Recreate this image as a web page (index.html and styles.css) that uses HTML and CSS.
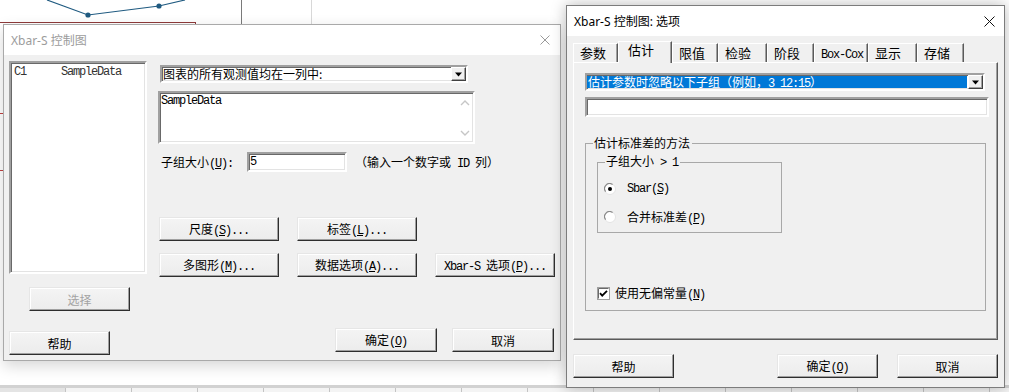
FILE: index.html
```html
<!DOCTYPE html>
<html lang="zh-CN">
<head>
<meta charset="utf-8">
<title>Xbar-S 控制图</title>
<link rel="stylesheet" href="styles.css">
</head>
<body>
<div class="desk">
  <svg class="bg-chart" width="330" height="200" viewBox="0 0 330 200">
    <polyline points="47,0 88,15 159,6 185,0" fill="none" stroke="#1f5a80" stroke-width="1.2"/>
    <circle cx="88" cy="15" r="2.6" fill="#1f5a80"/>
    <circle cx="159" cy="6" r="2.6" fill="#1f5a80"/>
    <line x1="0" y1="22.5" x2="195" y2="22.5" stroke="#8e3a3a"/>
    <line x1="195.5" y1="22" x2="195.5" y2="25" stroke="#8e3a3a"/>
    <line x1="241.5" y1="0" x2="241.5" y2="25" stroke="#7a7a7a"/>
    <line x1="311.5" y1="0" x2="311.5" y2="25" stroke="#d8d8d8"/>
    <line x1="0" y1="113.5" x2="3" y2="113.5" stroke="#c04040"/>
    <line x1="0" y1="170.5" x2="3" y2="170.5" stroke="#c04040"/>
  </svg>

  <div class="sheet">
    <div class="cell head"></div><div class="cell"></div><div class="cell"></div><div class="cell"></div><div class="cell"></div><div class="cell"></div><div class="cell"></div><div class="cell"></div><div class="cell"></div><div class="cell"></div><div class="cell"></div><div class="cell"></div><div class="cell"></div><div class="cell"></div><div class="cell"></div><div class="cell"></div>
  </div>

  <!-- Main dialog (inactive) -->
  <div class="win win-main">
    <div class="titlebar inactive">
      <span class="title">Xbar-S 控制图</span>
      <svg class="close" width="10" height="10" viewBox="0 0 10 10"><path d="M0.5 0.5 L9.5 9.5 M9.5 0.5 L0.5 9.5" stroke="#9a9a9a" stroke-width="1"/></svg>
    </div>
    <div class="main-body">
      <div class="col-left">
        <div class="listbox sunken">
          <div class="list-item"><span class="l">C1</span><span class="l">SampleData</span></div>
        </div>
        <div class="btn btn-select disabled"><span>选择</span></div>
        <div class="btn btn-help"><span>帮助</span></div>
      </div>
      <div class="col-right">
        <div class="combo sunken">
          <span class="combo-text">图表的所有观测值均在一列中:</span>
          <span class="drop"><svg width="9" height="5" viewBox="0 0 9 5"><path d="M1 0.5 H8 L4.5 4.5 Z" fill="#000"/></svg></span>
        </div>
        <div class="textarea sunken">
          <span class="l ta-text">SampleData</span>
          <span class="vscroll">
            <svg width="10" height="6" viewBox="0 0 10 6"><path d="M1 5 L5 1 L9 5" fill="none" stroke="#c6c6c6" stroke-width="1.4"/></svg>
            <svg width="10" height="6" viewBox="0 0 10 6"><path d="M1 1 L5 5 L9 1" fill="none" stroke="#c6c6c6" stroke-width="1.4"/></svg>
          </span>
        </div>
        <div class="size-row">
          <span class="size-label">子组大小<span class="l">(<u>U</u>):</span></span>
          <span class="field sunken"><span class="l">5</span></span>
          <span class="hint">（输入一个数字或<span class="l"> ID </span>列）</span>
        </div>
        <div class="btn-grid">
          <div class="btn"><span>尺度<span class="l">(<u>S</u>)...</span></span></div>
          <div class="btn"><span>标签<span class="l">(<u>L</u>)...</span></span></div>
          <div class="empty"></div>
          <div class="btn"><span>多图形<span class="l">(<u>M</u>)...</span></span></div>
          <div class="btn"><span>数据选项<span class="l">(<u>A</u>)...</span></span></div>
          <div class="btn"><span><span class="l">Xbar-S </span>选项<span class="l">(<u>P</u>)...</span></span></div>
        </div>
        <div class="footer-main">
          <div class="btn btn-wide"><span>确定<span class="l">(<u>O</u>)</span></span></div>
          <div class="btn btn-wide"><span>取消</span></div>
        </div>
      </div>
    </div>
  </div>

  <!-- Options dialog (active) -->
  <div class="win win-opts">
    <div class="titlebar">
      <span class="title">Xbar-S 控制图: 选项</span>
      <svg class="close" width="11" height="11" viewBox="0 0 11 11"><path d="M0.5 0.5 L10.5 10.5 M10.5 0.5 L0.5 10.5" stroke="#111" stroke-width="1"/></svg>
    </div>
    <div class="opts-body">
      <div class="tabs">
        <div class="tab w45">参数</div>
        <div class="tab active w54">估计</div>
        <div class="tab w46">限值</div>
        <div class="tab w49">检验</div>
        <div class="tab w47">阶段</div>
        <div class="tab w54"><span class="l">Box-Cox</span></div>
        <div class="tab w49">显示</div>
        <div class="tab w47">存储</div>
      </div>
      <div class="panel">
        <div class="combo combo-sel sunken">
          <span class="combo-text sel">估计参数时忽略以下子组（例如，<span class="l">3 12:15</span>）</span>
          <span class="drop"><svg width="9" height="5" viewBox="0 0 9 5"><path d="M1 0.5 H8 L4.5 4.5 Z" fill="#000"/></svg></span>
        </div>
        <div class="field field-wide sunken"></div>
        <fieldset class="group group-outer">
          <legend>估计标准差的方法</legend>
          <fieldset class="group group-inner">
            <legend>子组大小<span class="l"> &gt; 1</span></legend>
            <div class="radio-row first">
              <svg width="12" height="12" viewBox="0 0 12 12">
                <circle cx="6" cy="6" r="5.5" fill="#fff" stroke="#e3e3e3"/>
                <path d="M1.6 8.6 A5 5 0 0 1 8.6 1.6" fill="none" stroke="#8a8a8a" stroke-width="1.2"/>
                <circle cx="6" cy="6" r="2" fill="#000"/>
              </svg>
              <span class="l">Sbar(<u>S</u>)</span>
            </div>
            <div class="radio-row">
              <svg width="12" height="12" viewBox="0 0 12 12">
                <circle cx="6" cy="6" r="5.5" fill="#fff" stroke="#e3e3e3"/>
                <path d="M1.6 8.6 A5 5 0 0 1 8.6 1.6" fill="none" stroke="#8a8a8a" stroke-width="1.2"/>
              </svg>
              <span>合并标准差<span class="l">(<u>P</u>)</span></span>
            </div>
          </fieldset>
          <div class="check-row">
            <svg width="13" height="13" viewBox="0 0 13 13">
              <rect x="0.5" y="0.5" width="12" height="12" fill="#fff" stroke="#a0a0a0"/>
              <path d="M1.5 11.5 V1.5 H11.5" fill="none" stroke="#696969"/>
              <path d="M3 6.2 L5.2 8.6 L10 3.8" fill="none" stroke="#000" stroke-width="1.8"/>
            </svg>
            <span>使用无偏常量<span class="l">(<u>N</u>)</span></span>
          </div>
        </fieldset>
      </div>
      <div class="footer-opts">
        <div class="btn btn-o"><span>帮助</span></div>
        <div class="spacer"></div>
        <div class="btn btn-o"><span>确定<span class="l">(<u>O</u>)</span></span></div>
        <div class="btn btn-o"><span>取消</span></div>
      </div>
    </div>
  </div>
</div>
</body>
</html>
```

FILE: styles.css
```css
* { box-sizing: border-box; }

html, body {
  margin: 0;
  padding: 0;
  background: #fff;
}

.desk {
  position: relative;
  width: 1009px;
  height: 392px;
  overflow: hidden;
  background: #fff;
  font-family: "Noto Sans CJK SC", sans-serif;
  font-size: 12px;
  color: #000;
}

.bg-chart {
  position: absolute;
  left: 0;
  top: 0;
}

.sheet {
  position: absolute;
  left: 0;
  top: 385px;
  width: 1009px;
  height: 7px;
  background: #d2d2d2;
  padding-top: 3px;
  display: flex;
}

.cell {
  width: 66px;
  flex: none;
  background: #f4f4f4;
  border-left: 1px solid #c4c4c4;
}

.cell.head {
  width: 65px;
  background: #e4e4e4;
  border-left: none;
}

/* Latin runs in the dialog font */
.l {
  font-family: "Liberation Mono", monospace;
  font-size: 12px;
  letter-spacing: -1.2px;
  white-space: pre;
}

u { text-decoration: underline; text-underline-offset: 1px; }

/* Windows */
.win {
  position: absolute;
  display: flex;
  flex-direction: column;
  background: #f0f0f0;
}

.win-main {
  left: 3px;
  top: 24px;
  width: 558px;
  height: 337px;
  border: 1px solid #a9a9a9;
  box-shadow: 0 5px 14px rgba(0, 0, 0, 0.16);
}

.win-opts {
  left: 566px;
  top: 5px;
  width: 439px;
  height: 383px;
  border: 1px solid #7c7c7c;
  box-shadow: 0 0 14px rgba(0, 0, 0, 0.28);
}

.titlebar {
  flex: none;
  height: 30px;
  background: #fff;
  display: flex;
  align-items: center;
  justify-content: space-between;
  padding: 0 9px 0 7px;
  font-family: "Noto Sans", "Noto Sans CJK SC", sans-serif;
  font-size: 12px;
  color: #000;
}

.win-main .titlebar { padding-right: 10px; }

.titlebar.inactive { color: #9c9c9c; }

/* Sunken 3D edge */
.sunken {
  background: #fff;
  border: 2px solid;
  border-color: #a0a0a0 #fff #fff #a0a0a0;
  box-shadow: inset 1px 1px 0 #696969, inset -1px -1px 0 #e3e3e3;
}

/* Buttons */
.btn {
  height: 24px;
  display: flex;
  align-items: center;
  justify-content: center;
  background: linear-gradient(#f4f4f4, #ececec);
  border: 1px solid;
  border-color: #e6e6e6 #2e2e2e #2e2e2e #e6e6e6;
  box-shadow: inset -1px -1px 0 #a0a0a0, inset 1px 1px 0 #fff;
  white-space: nowrap;
}

.btn.disabled { color: #a3a3a3; }

/* Main dialog body */
.main-body {
  flex: 1;
  display: flex;
}

.col-left {
  width: 154px;
  flex: none;
  padding: 6px 0 0 5px;
  display: flex;
  flex-direction: column;
  align-items: flex-start;
}

.listbox {
  width: 138px;
  height: 213px;
  padding: 2px 0 0 3px;
}

.list-item {
  display: grid;
  grid-template-columns: 47px auto;
  line-height: 14px;
  color: #333;
}

.btn-select {
  width: 101px;
  margin: 13px 0 0 20px;
}

.btn-help {
  width: 101px;
  margin-top: 20px;
}

.col-right {
  flex: 1;
  padding: 10px 5px 0 0;
  display: flex;
  flex-direction: column;
  align-items: flex-start;
}

.combo {
  width: 308px;
  height: 18px;
  margin-left: 2px;
  display: flex;
  align-items: stretch;
  justify-content: space-between;
}

.combo-text {
  padding-left: 1px;
  line-height: 14px;
  white-space: nowrap;
}

.drop {
  width: 15px;
  flex: none;
  display: flex;
  align-items: center;
  justify-content: center;
  background: #f0f0f0;
  border: 1px solid;
  border-color: #fff #404040 #404040 #fff;
  box-shadow: inset -1px -1px 0 #a0a0a0;
}

.textarea {
  width: 317px;
  height: 53px;
  margin-top: 8px;
  display: flex;
  justify-content: space-between;
}

.ta-text {
  padding: 1px 0 0 1px;
  line-height: 14px;
}

.vscroll {
  width: 17px;
  display: flex;
  flex-direction: column;
  justify-content: space-between;
  align-items: center;
  padding: 7px 0 6px;
}

.size-row {
  margin-top: 8px;
  height: 20px;
  display: flex;
  align-items: center;
}

.size-label {
  width: 89px;
  padding-left: 3px;
}

.field {
  width: 100px;
  height: 20px;
  padding-left: 1px;
  display: flex;
  align-items: center;
}

.hint { margin-left: 8px; }

.btn-grid {
  margin: 45px 0 0 1px;
  display: grid;
  grid-template-columns: 120px 120px 120px;
  grid-auto-rows: 24px;
  column-gap: 18px;
  row-gap: 12px;
}

.footer-main {
  align-self: stretch;
  margin-top: 51px;
  display: flex;
  justify-content: flex-end;
  gap: 15px;
  padding-right: 1px;
}

.btn-wide { width: 102px; }

/* Options dialog body */
.opts-body {
  flex: 1;
  padding: 5px 6px 0 6px;
  display: flex;
  flex-direction: column;
}

.tabs {
  height: 21px;
  display: flex;
  align-items: flex-end;
}

.tab {
  height: 19px;
  padding-left: 6px;
  font-size: 13px;
  line-height: 17px;
  white-space: nowrap;
  border-top: 1px solid #fff;
  border-left: 1px solid #fff;
  border-right: 1px solid #5a5a5a;
  box-shadow: inset -1px 0 0 #a0a0a0;
}

.tab .l { font-size: 12px; }

.tab.active {
  position: relative;
  z-index: 1;
  height: 22px;
  margin-bottom: -1px;
  padding-left: 9px;
  line-height: 16px;
  background: #f0f0f0;
}

.w45 { width: 45px; }
.w46 { width: 46px; }
.w47 { width: 47px; }
.w49 { width: 49px; }
.w54 { width: 54px; }

.panel {
  width: 425px;
  height: 278px;
  border: 1px solid;
  border-color: #fff #5a5a5a #5a5a5a #fff;
  box-shadow: inset -1px -1px 0 #a0a0a0;
  padding: 10px 0 0 11px;
  display: flex;
  flex-direction: column;
  align-items: flex-start;
}

.combo-sel {
  width: 400px;
  margin-left: 0;
}

.combo-text.sel {
  flex: 1;
  margin: 1px 1px 1px 0;
  background: #0078d7;
  color: #fff;
  line-height: 12px;
}

.field-wide {
  width: 404px;
  margin-top: 6px;
}

.group {
  margin: 0;
  border: 1px solid #a8a8a8;
  min-width: 0;
}

.group legend {
  padding: 0 2px 0 1px;
  line-height: 14px;
  font-size: 12px;
}

.group-outer {
  width: 401px;
  height: 175px;
  margin-top: 19px;
  padding: 0 0 0 11px;
}

.group-outer > legend { margin-left: -4px; }

.group-inner {
  width: 185px;
  height: 79px;
  margin-top: 4px;
  padding: 0 0 0 6px;
}

.group-inner > legend { margin-left: 1px; }

.radio-row {
  height: 16px;
  margin-top: 12px;
  display: flex;
  align-items: center;
  gap: 11px;
}

.radio-row.first { margin-top: 11px; }

.check-row {
  height: 16px;
  margin-top: 52px;
  display: flex;
  align-items: center;
  gap: 5px;
}

.footer-opts {
  margin-top: 14px;
  display: flex;
  gap: 19px;
}

.spacer { flex: 1; }

.btn-o { width: 101px; }
```
